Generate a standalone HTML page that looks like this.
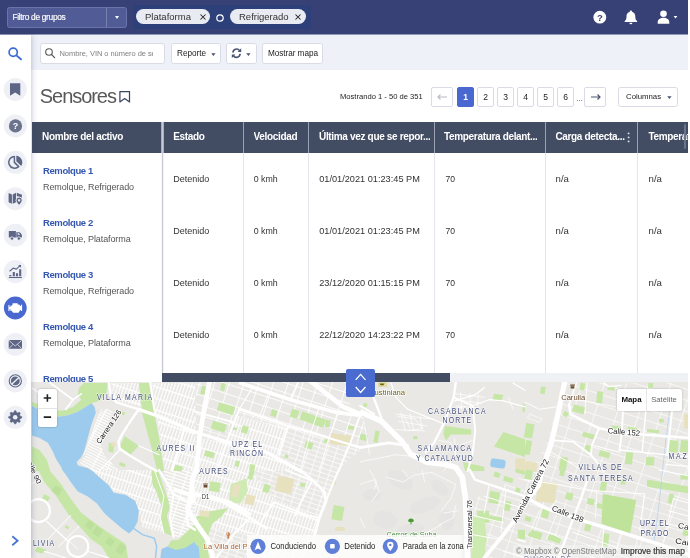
<!DOCTYPE html>
<html lang="es">
<head>
<meta charset="utf-8">
<title>Sensores</title>
<style>
*{box-sizing:border-box;margin:0;padding:0}
html,body{width:690px;height:558px;overflow:hidden;background:#fff;font-family:"Liberation Sans",sans-serif;color:#333;}
#wrap{position:absolute;left:0;top:0;width:690px;height:558px;overflow:hidden;will-change:transform;transform:translateZ(0)}
.abs{position:absolute}
#hdr{position:absolute;left:0;top:0;width:690px;height:35px;background:#374175;border-bottom:1px solid #9097b8}
#chipband{position:absolute;left:133px;top:5px;width:178px;height:24px;background:#2d4079}
#gf{position:absolute;left:7px;top:7px;width:120px;height:21px;background:#515c97;border:1px solid #6a74aa;border-radius:2.5px;color:#fff;font-size:8.4px;line-height:18.5px;padding-left:4.4px;letter-spacing:-0.32px;-webkit-text-stroke:0.15px #fff}
#gf i{position:absolute;left:98px;top:0;width:1px;height:19px;background:#7880b0}
#gf b{position:absolute;left:107px;top:8px;border:2.5px solid transparent;border-top:3.5px solid #fff;width:0;height:0}
.chip{position:absolute;top:9px;height:15px;border-radius:8px;background:#e9ebf3;color:#333;font-size:9.5px;line-height:15px;padding-left:10px}
.chip span{position:absolute;right:5px;top:0;font-size:8.5px;font-weight:bold;color:#222}
#side{position:absolute;left:0;top:35px;width:31px;height:524px;background:#fff;box-shadow:1px 0 5px rgba(60,70,110,.28);z-index:5}
#tool{position:absolute;left:30px;top:35px;width:660px;height:35px;background:#eff1f8}
.btn{position:absolute;background:#fff;border:1px solid #d9dce6;border-radius:2.5px;font-size:8.2px;color:#222;line-height:19px;height:21px;white-space:nowrap}
.car{position:absolute;border:2.3px solid transparent;border-top:2.9px solid #4a5470;width:0;height:0}
#title{position:absolute;left:39.8px;top:83.3px;font-size:20px;font-weight:normal;color:#585858;letter-spacing:-1.05px;line-height:26px}
.pg{position:absolute;top:87px;height:20px;width:17px;border:1px solid #d9dce6;border-radius:2px;background:#fff;font-size:8.5px;line-height:18px;text-align:center;color:#222}
#thead{position:absolute;left:32px;top:122px;width:656px;height:31px;background:#424c63}
.th{position:absolute;top:122px;height:31px;color:#fff;font-weight:bold;font-size:10px;letter-spacing:-0.33px;line-height:29px;white-space:nowrap;overflow:hidden}
.vl{position:absolute;top:122px;width:1px;height:251px;background:#e3e5ea}
.td{position:absolute;font-size:9px;color:#333;white-space:nowrap;line-height:12px}
.nm{position:absolute;left:43px;font-size:9.5px;font-weight:bold;letter-spacing:-0.4px;color:#3557b0;white-space:nowrap;line-height:12px}
.sb{position:absolute;left:43px;font-size:9px;letter-spacing:-0.1px;color:#555;white-space:nowrap;line-height:12px}
#map{position:absolute;left:31px;top:382px;width:659px;height:176px;overflow:hidden;background:#e8e6e1}
</style>
</head>
<body>
<div id="wrap">
<div id="hdr">
  <div id="chipband"></div>
  <div id="gf">Filtro de grupos<i></i><b></b></div>
  <div class="chip" style="left:136px;width:74px;padding-left:9px">Plataforma<svg class="abs" style="left:63.6px;top:4.6px" width="6" height="6"><path d="M0.5 0.5 L5.5 5.5 M5.5 0.5 L0.5 5.5" stroke="#222" stroke-width="1.05"/></svg></div>
  <svg class="abs" style="left:215px;top:12.6px" width="10" height="10"><circle cx="5" cy="5" r="3.2" fill="none" stroke="#fff" stroke-width="1.2"/></svg>
  <div class="chip" style="left:230px;width:76px;padding-left:9px">Refrigerado<svg class="abs" style="left:64.8px;top:4.6px" width="6" height="6"><path d="M0.5 0.5 L5.5 5.5 M5.5 0.5 L0.5 5.5" stroke="#222" stroke-width="1.05"/></svg></div>
<svg class="abs" style="left:586px;top:3px" width="100" height="28" viewBox="586 3 100 28">
<circle cx="599.8" cy="17.2" r="6.4" fill="#fff"/><text x="599.8" y="20.6" font-family="Liberation Sans, sans-serif" font-weight="bold" font-size="9.5" fill="#353f73" text-anchor="middle">?</text>
<path d="M630.9 10.6 c0.7 0 1.1 0.5 1.1 1.1 c2.2 0.6 3.3 2.5 3.3 4.7 c0 2.6 0.6 3.6 1.8 4.6 v0.9 h-12.4 v-0.9 c1.2 -1 1.8 -2 1.8 -4.6 c0 -2.2 1.1 -4.1 3.3 -4.7 c0 -0.6 0.4 -1.1 1.1 -1.1 z" fill="#fff"/><path d="M629.4 22.7 h3 a1.5 1.5 0 0 1 -3 0 z" fill="#fff"/>
<circle cx="663.5" cy="13.8" r="3.3" fill="#fff"/><path d="M657.7 23.7 v-1.4 c0 -3 2.6 -4.6 5.8 -4.6 c3.2 0 5.8 1.6 5.8 4.6 v1.4 z" fill="#fff"/>
<path d="M673.6 16 h3.8 l-1.9 2.4 z" fill="#fff"/>
</svg>
</div>
<div id="tool"></div>
<div class="btn" style="left:40px;top:43px;width:125px;border-radius:3px"></div>
<svg class="abs" style="left:44px;top:47px" width="12" height="12" viewBox="0 0 12 12"><circle cx="5" cy="5" r="3.3" fill="none" stroke="#555" stroke-width="1.1"/><path d="M7.4 7.4 L10.6 10.6" stroke="#555" stroke-width="1.3" stroke-linecap="round"/></svg>
<div class="abs" style="left:59.5px;top:47.5px;width:93px;height:12px;overflow:hidden;font-size:7.5px;line-height:12px;color:#808080;white-space:nowrap;letter-spacing:-0.05px">Nombre, VIN o número de serie</div>
<div class="btn" style="left:171px;top:43px;width:50px;padding-left:5px">Reporte<svg class="abs" style="left:38.5px;top:8.6px" width="5" height="3.2" viewBox="0 0 5 3.2"><path d="M0.2 0.2 H4.6 L2.4 3 Z" fill="#4a5470"/></svg></div>
<div class="btn" style="left:226px;top:43px;width:31px"><svg class="abs" style="left:19.2px;top:8.6px" width="5" height="3.2" viewBox="0 0 5 3.2"><path d="M0.2 0.2 H4.6 L2.4 3 Z" fill="#4a5470"/></svg>
<svg class="abs" style="left:0;top:0" width="29" height="19" viewBox="227 44 29 19"><g fill="none" stroke="#4a5470" stroke-width="1.6"><path d="M232.9 52.6 A3.7 3.7 0 0 1 239.6 50.6"/><path d="M240.1 53.8 A3.7 3.7 0 0 1 233.4 55.8"/></g><path d="M241.2 48.3 V52 H237.5 Z M231.8 58.1 V54.4 H235.5 Z" fill="#4a5470"/></svg></div>
<div class="btn" style="left:262px;top:43px;width:61px;padding-left:5px;letter-spacing:-0.05px">Mostrar mapa</div>
<div id="side"></div>
<svg class="abs" style="left:0;top:34px;z-index:6" width="34" height="524" viewBox="0 34 34 524">
<circle cx="15.3" cy="89.4" r="11.5" fill="#eff0f6"/>
<circle cx="15.3" cy="125.9" r="11.5" fill="#eff0f6"/>
<circle cx="15.3" cy="162.3" r="11.5" fill="#eff0f6"/>
<circle cx="15.3" cy="198.7" r="11.5" fill="#eff0f6"/>
<circle cx="15.3" cy="235.2" r="11.5" fill="#eff0f6"/>
<circle cx="15.3" cy="271.6" r="11.5" fill="#eff0f6"/>
<circle cx="15.3" cy="308.0" r="11.4" fill="#4a69d0"/>
<circle cx="15.3" cy="344.4" r="11.5" fill="#eff0f6"/>
<circle cx="15.3" cy="380.9" r="11.5" fill="#eff0f6"/>
<circle cx="15.3" cy="417.3" r="11.5" fill="#eff0f6"/>
<circle cx="13.2" cy="52.2" r="4.1" fill="none" stroke="#3d6bd1" stroke-width="1.7"/><path d="M16.4 55.4 L21 59.3" stroke="#3d6bd1" stroke-width="1.9" stroke-linecap="round"/>
<path d="M10 83.3 h10.3 v12.4 l-5.15 -3.3 l-5.15 3.3 z" fill="#5d6785"/>
<circle cx="15.5" cy="125.9" r="6.6" fill="#6b748d"/><text x="15.5" y="129.0" font-family="Liberation Sans, sans-serif" font-weight="bold" font-size="9" fill="#fff" text-anchor="middle">?</text>
<path d="M14.4 156.4 A5.9 5.9 0 1 0 18.7 166.6 L14.4 162.4 Z" fill="none" stroke="#5d6785" stroke-width="1.5" stroke-linejoin="round"/><path d="M16.3 155.8 A6.5 6.5 0 0 1 21.2 165.9 L16.3 161.2 Z" fill="#5d6785"/>
<path d="M8.6 192.9 l3.3 1.5 v9.4 l-3.3 -1.5 z M12.7 194.4 l3.3 -1.6 v9.4 l-3.3 1.6 z M16.8 192.8 l3.6 1.5 l1.5 0.2 v3.2 l-5.1 -1.6 z" fill="#5d6785"/><path d="M19.1 197.1 a3.1 3.1 0 0 1 3.1 3.1 c0 2.2 -3.1 5 -3.1 5 c0 0 -3.1 -2.8 -3.1 -5 a3.1 3.1 0 0 1 3.1 -3.1 z" fill="#5d6785" stroke="#eff0f6" stroke-width="0.9"/><rect x="18" y="199.2" width="2.2" height="2.2" rx="0.4" fill="#eff0f6"/>
<path d="M8.8 231.0 h7.1 v6.6 h-7.1 z M16.3 232.2 h2.8 q1 0 1.6 0.9 l1.2 1.9 v2.6 h-5.6 z" fill="#5d6785"/><path d="M17.6 233.2 h1.4 l1.2 1.6 h-2.6 z" fill="#eff0f6"/><circle cx="12" cy="238.5" r="1.7" fill="#5d6785" stroke="#eff0f6" stroke-width="0.8"/><circle cx="18.9" cy="238.5" r="1.7" fill="#5d6785" stroke="#eff0f6" stroke-width="0.8"/>
<path d="M8.8 277.5 h13.1" stroke="#5d6785" stroke-width="1.1"/><path d="M10.3 275.0 v1.2 M13.8 272.1 v4.1 M17 273.2 v3 M20.2 269.3 v6.9" stroke="#5d6785" stroke-width="2.1"/><path d="M9.9 271.0 l3.4 -2.8 l3 0.9 l3.3 -3" fill="none" stroke="#5d6785" stroke-width="1.1" stroke-linecap="round"/><path d="M18.2 265.0 h2.8 v2.8 z" fill="#5d6785"/>
<path d="M12.6 303.2 h5 v1.3 h1.6 l1 1.4 h0.7 v-1.2 h1.2 v6.4 h-1.2 v-1.2 h-0.7 l-1.6 2.8 h-5.4 l-1.7 -1.9 h-1.1 v-1.6 h-0.9 v1.7 h-1.1 v-5.8 h1.1 v1.8 h0.9 v-1.2 h1.1 l1.1 -1.2 z" fill="#fff"/>
<rect x="8.7" y="340.0" width="13.3" height="8.8" rx="0.9" fill="#5d6785"/><path d="M8.9 340.4 l6.4 5.6 l6.4 -5.6 M8.9 348.6 l4.4 -4.4 M21.7 348.6 l-4.4 -4.4" fill="none" stroke="#d4d7e2" stroke-width="0.9"/>
<circle cx="15.3" cy="380.9" r="6.1" fill="none" stroke="#5d6785" stroke-width="1.1"/><circle cx="15.3" cy="380.9" r="4.4" fill="#5d6785"/><path d="M11.6 384.3 L19 377.5" stroke="#eff0f6" stroke-width="1.4"/>
<path d="M14.55 410.73 L15.85 410.73 L16.62 412.61 L17.51 412.98 L19.39 412.20 L20.30 413.11 L19.52 414.99 L19.89 415.88 L21.77 416.65 L21.77 417.95 L19.89 418.72 L19.52 419.61 L20.30 421.49 L19.39 422.40 L17.51 421.62 L16.62 421.99 L15.85 423.87 L14.55 423.87 L13.78 421.99 L12.89 421.62 L11.01 422.40 L10.10 421.49 L10.88 419.61 L10.51 418.72 L8.63 417.95 L8.63 416.65 L10.51 415.88 L10.88 414.99 L10.10 413.11 L11.01 412.20 L12.89 412.98 L13.78 412.61Z" fill="#5d6785" stroke="#5d6785" stroke-width="0.6" stroke-linejoin="round"/><circle cx="15.2" cy="417.3" r="2.3" fill="#eff0f6"/>
<path d="M12.3 536.2 L17.6 540.7 L12.3 545.2" fill="none" stroke="#4677d6" stroke-width="1.8"/>
</svg>
<div id="title">Sensores</div>
<svg class="abs" style="left:117px;top:88px" width="16" height="17" viewBox="117 88 16 17"><path d="M119.9 91.5 H129.5 V101.9 L124.7 98.6 L119.9 101.9 Z" fill="none" stroke="#3c4660" stroke-width="1.25" stroke-linejoin="round"/></svg>
<div class="td" style="left:340px;top:90.5px;font-size:7.6px;color:#222">Mostrando 1 - 50 de 351</div>
<div class="pg" style="left:431px;width:22px"><svg width="12" height="8" viewBox="0 0 12 8" style="position:absolute;left:4px;top:5px"><path d="M11 4 H2 M4.5 1.5 L2 4 L4.5 6.5" fill="none" stroke="#b9bcc6" stroke-width="1.1"/></svg></div>
<div class="pg" style="left:457px;background:#4a69d0;border-color:#4a69d0;color:#fff;font-weight:bold">1</div>
<div class="pg" style="left:477px;">2</div>
<div class="pg" style="left:497px;">3</div>
<div class="pg" style="left:517px;">4</div>
<div class="pg" style="left:537px;">5</div>
<div class="pg" style="left:557px;">6</div>
<div class="td" style="left:576.5px;top:93px;font-size:7.5px">...</div>
<div class="pg" style="left:584px;width:22px"><svg width="12" height="8" viewBox="0 0 12 8" style="position:absolute;left:4.5px;top:5px"><path d="M1 4 H10 M7.5 1.5 L10 4 L7.5 6.5" fill="none" stroke="#4a5470" stroke-width="1.2"/></svg></div>
<div class="btn" style="left:618px;top:87px;width:60px;height:20px;line-height:18px;padding-left:7px;font-size:7.8px">Columnas<svg class="abs" style="left:48.3px;top:7.5px" width="5" height="3.2" viewBox="0 0 5 3.2"><path d="M0.2 0.2 H4.6 L2.4 3 Z" fill="#4a5470"/></svg></div>
<div id="thead"></div>
<div class="th" style="left:42px">Nombre del activo</div>
<div class="th" style="left:173.2px">Estado</div>
<div class="th" style="left:253.5px">Velocidad</div>
<div class="th" style="left:319px">Última vez que se repor...</div>
<div class="th" style="left:444px">Temperatura delant...</div>
<div class="th" style="left:555.4px">Carga detecta...</div>
<div class="th" style="left:648.4px">Temperat</div>
<div class="vl" style="left:243px"></div>
<div class="vl" style="left:308px"></div>
<div class="vl" style="left:434px"></div>
<div class="vl" style="left:545px"></div>
<div class="vl" style="left:637px"></div>
<div class="abs" style="left:161px;top:153px;width:1px;height:220px;background:#f6f7f9"></div><div class="abs" style="left:162px;top:153px;width:1px;height:220px;background:#c9ccd5"></div><div class="abs" style="left:163px;top:153px;width:1px;height:220px;background:#f0f1f4"></div>
<div class="abs" style="left:243px;top:122px;width:1px;height:31px;background:#9aa1b2"></div>
<div class="abs" style="left:308px;top:122px;width:1px;height:31px;background:#9aa1b2"></div>
<div class="abs" style="left:434px;top:122px;width:1px;height:31px;background:#9aa1b2"></div>
<div class="abs" style="left:545px;top:122px;width:1px;height:31px;background:#9aa1b2"></div>
<div class="abs" style="left:637px;top:122px;width:1px;height:31px;background:#9aa1b2"></div>
<div class="abs" style="left:161px;top:122px;width:1px;height:31px;background:#a9afbf"></div><div class="abs" style="left:162px;top:122px;width:1px;height:31px;background:#c6cad6"></div><div class="abs" style="left:163px;top:122px;width:1px;height:31px;background:#a9afbf"></div>
<div class="abs" style="left:688px;top:122px;width:2px;height:251px;background:#fff"></div>
<div class="abs" style="left:684px;top:124px;width:2px;height:25px;background:#6b748a;border-radius:1px"></div>
<svg class="abs" style="left:626px;top:130px" width="6" height="14"><circle cx="2.6" cy="3.4" r="0.95" fill="#dfe2ea"/><circle cx="2.6" cy="7.4" r="0.95" fill="#dfe2ea"/><circle cx="2.6" cy="11.4" r="0.95" fill="#dfe2ea"/></svg>
<div class="nm" style="top:164.7px">Remolque 1</div><div class="sb" style="top:180.7px">Remolque, Refrigerado</div>
<div class="td" style="left:173.3px;top:173px;font-size:9px">Detenido</div>
<div class="td" style="left:253.7px;top:173px;font-size:8.8px">0 kmh</div>
<div class="td" style="left:319.2px;top:173px;font-size:9.2px">01/01/2021 01:23:45 PM</div>
<div class="td" style="left:445.6px;top:173px;font-size:8.6px">70</div>
<div class="td" style="left:555.6px;top:173px;font-size:9.6px">n/a</div>
<div class="td" style="left:648.6px;top:173px;font-size:9.6px">n/a</div>
<div class="nm" style="top:216.7px">Remolque 2</div><div class="sb" style="top:232.7px">Remolque, Plataforma</div>
<div class="td" style="left:173.3px;top:225px;font-size:9px">Detenido</div>
<div class="td" style="left:253.7px;top:225px;font-size:8.8px">0 kmh</div>
<div class="td" style="left:319.2px;top:225px;font-size:9.2px">01/01/2021 01:23:45 PM</div>
<div class="td" style="left:445.6px;top:225px;font-size:8.6px">70</div>
<div class="td" style="left:555.6px;top:225px;font-size:9.6px">n/a</div>
<div class="td" style="left:648.6px;top:225px;font-size:9.6px">n/a</div>
<div class="nm" style="top:268.7px">Remolque 3</div><div class="sb" style="top:284.7px">Remolque, Refrigerado</div>
<div class="td" style="left:173.3px;top:277px;font-size:9px">Detenido</div>
<div class="td" style="left:253.7px;top:277px;font-size:8.8px">0 kmh</div>
<div class="td" style="left:319.2px;top:277px;font-size:9.2px">23/12/2020 01:15:15 PM</div>
<div class="td" style="left:445.6px;top:277px;font-size:8.6px">70</div>
<div class="td" style="left:555.6px;top:277px;font-size:9.6px">n/a</div>
<div class="td" style="left:648.6px;top:277px;font-size:9.6px">n/a</div>
<div class="nm" style="top:320.7px">Remolque 4</div><div class="sb" style="top:336.7px">Remolque, Plataforma</div>
<div class="td" style="left:173.3px;top:329px;font-size:9px">Detenido</div>
<div class="td" style="left:253.7px;top:329px;font-size:8.8px">0 kmh</div>
<div class="td" style="left:319.2px;top:329px;font-size:9.2px">22/12/2020 14:23:22 PM</div>
<div class="td" style="left:445.6px;top:329px;font-size:8.6px">70</div>
<div class="td" style="left:555.6px;top:329px;font-size:9.6px">n/a</div>
<div class="td" style="left:648.6px;top:329px;font-size:9.6px">n/a</div>
<div class="nm" style="top:372.7px;height:10px;overflow:hidden">Remolque 5</div>
<div class="abs" style="left:162px;top:372.5px;width:528px;height:9.5px;background:#f0f1f4"></div>
<div class="abs" style="left:162px;top:373px;width:288px;height:9px;background:#424c63"></div>
<div id="map"><svg width="659" height="176" viewBox="31 382 659 176" style="position:absolute;left:0;top:0">
<defs>
<pattern id="g18" width="9" height="4.6" patternUnits="userSpaceOnUse" patternTransform="rotate(18)"><path d="M0 0.4 H9 M0.4 0 V4.6" stroke="#fff" stroke-width="0.75" fill="none"/></pattern>
<pattern id="g18s" width="14" height="9.5" patternUnits="userSpaceOnUse" patternTransform="rotate(18)"><path d="M0 0.5 H14 M0.5 0 V9.5" stroke="#fff" stroke-width="0.85" fill="none"/></pattern>
<pattern id="g18b" width="21" height="10.5" patternUnits="userSpaceOnUse" patternTransform="rotate(18)"><path d="M0 0.5 H21 M0.5 0 V10.5" stroke="#fff" stroke-width="0.9" stroke-opacity="0.7" fill="none"/></pattern>
<pattern id="h28" width="14" height="2.7" patternUnits="userSpaceOnUse" patternTransform="rotate(27)"><path d="M0 0.6 H14 M0.5 0 V2.7" stroke="#fff" stroke-width="1.05" fill="none"/></pattern>
<pattern id="h108" width="3.2" height="11" patternUnits="userSpaceOnUse" patternTransform="rotate(18)"><path d="M0 0.6 H3.2 M0.6 0 V11" stroke="#fff" stroke-width="1.1" fill="none"/></pattern>
<pattern id="h18" width="12" height="3.2" patternUnits="userSpaceOnUse" patternTransform="rotate(18)"><path d="M0 0.6 H12 M0.6 0 V3.2" stroke="#fff" stroke-width="1.1" fill="none"/></pattern>
</defs>
<rect x="31" y="382" width="659" height="176" fill="#e9e8e5"/>
<polygon points="196,383 346,383 352,412 364,418 366,447 350,458 340,470 327,500 316,535 312,558 190,558 192,470" fill="url(#g18)"/>
<polygon points="196,382 346,382 352,412 364,418 366,447 329,438 288,426 239,409 232,432 196,428" fill="#e9e8e5"/>
<polygon points="196,382 346,382 352,412 364,418 366,447 329,438 288,426 239,409 232,432 196,428" fill="url(#g18s)"/>
<polygon points="562,383 690,383 690,558 480,558 472,500 530,472 548,440" fill="url(#g18b)"/>
<polygon points="98.9,414.1 106.6,408.5 112.9,411.7 105.0,429.3 100.2,443.6 105.0,456.4 119.3,471.0 91.4,471.0 82.6,465.9 79.8,462.4 85.0,456.7 89.0,442.3 94.1,426.4" fill="url(#h28)"/>
<polygon points="91.0,470.0 154.3,470.0 156.7,492.7 161.5,505.9 160.3,519.0 163.9,532.7 142.4,527.4 138.8,510.7 135.2,501.1 125.7,493.9 113.7,491.5 108.9,484.3 99.3,477.2" fill="#e9e8e5"/>
<polygon points="91.0,470.0 154.3,470.0 156.7,492.7 161.5,505.9 160.3,519.0 163.9,532.7 142.4,527.4 138.8,510.7 135.2,501.1 125.7,493.9 113.7,491.5 108.9,484.3 99.3,477.2" fill="url(#h108)" />
<polygon points="111.3,383.0 138.8,383.0 142.4,406.9 113.7,399.7" fill="#e9e8e5"/>
<polygon points="111.3,383.0 138.8,383.0 142.4,406.9 113.7,399.7" fill="url(#h108)" />
<polygon points="152.0,383.0 195.0,383.0 195.0,471.0 165.1,471.0 156.7,416.5" fill="#e9e8e5"/>
<polygon points="152.0,383.0 195.0,383.0 195.0,471.0 165.1,471.0 156.7,416.5" fill="url(#h108)" />
<polygon points="163.9,470.0 195.0,470.0 195.0,532.2 173.5,538.2" fill="#e9e8e5"/>
<polygon points="163.9,470.0 195.0,470.0 195.0,532.2 173.5,538.2" fill="url(#h18)" />
<polygon points="195.0,470.0 250.0,470.0 273.9,498.7 319.3,517.8 314.6,534.6 242.8,534.6 195.0,525.0" fill="#e9e8e5"/>
<polygon points="195.0,470.0 250.0,470.0 273.9,498.7 319.3,517.8 314.6,534.6 242.8,534.6 195.0,525.0" fill="url(#h108)" />
<polygon points="230.9,414.1 288.3,428.4 278.7,459.5 300.2,471.0 195.0,471.0 199.8,438.0 226.1,442.8" fill="#e9e8e5"/>
<polygon points="230.9,414.1 288.3,428.4 278.7,459.5 300.2,471.0 195.0,471.0 199.8,438.0 226.1,442.8" fill="url(#h108)" />
<ellipse cx="400" cy="480" rx="14" ry="8" fill="#e2e1dd" opacity="0.45" transform="rotate(30 400 480)"/>
<ellipse cx="425" cy="505" rx="16" ry="7" fill="#e2e1dd" opacity="0.45" transform="rotate(-20 425 505)"/>
<ellipse cx="385" cy="520" rx="12" ry="9" fill="#e2e1dd" opacity="0.45" transform="rotate(10 385 520)"/>
<ellipse cx="440" cy="488" rx="10" ry="6" fill="#e2e1dd" opacity="0.45" transform="rotate(40 440 488)"/>
<ellipse cx="410" cy="530" rx="14" ry="6" fill="#e2e1dd" opacity="0.45" transform="rotate(-10 410 530)"/>
<ellipse cx="372" cy="495" rx="9" ry="6" fill="#e2e1dd" opacity="0.45" transform="rotate(0 372 495)"/>
<ellipse cx="447" cy="520" rx="8" ry="10" fill="#e2e1dd" opacity="0.45" transform="rotate(0 447 520)"/>
<polygon points="31.9,401.7 31.9,405.7 44.3,412.9 56.8,417.0 68.3,415.3 77.8,411.7 87.4,405.7 91.7,403.3 99.3,400.9 106.5,392.6 107.7,383.0 83.8,383.0 79.0,387.8 77.8,395.0 81.4,399.7 73.0,406.9 63.5,410.5 53.9,410.5 42.0,405.7" fill="#c6e6a6" />
<polygon points="138.8,383.0 149.6,383.0 152.0,397.3 154.6,415.3 157.7,430.8 160.3,445.2 163.9,471.0 157.2,471.0 151.5,447.6 146.7,430.8 142.4,414.1 140.5,399.7" fill="#c6e6a6" />
<polygon points="151.5,470.0 157.9,470.0 161.0,479.6 168.2,499.9 169.9,508.3 166.8,515.4 171.6,535.8 164.4,532.7 160.3,519.0 161.5,505.9 156.7,492.7 152.4,484.3" fill="#c6e6a6" />
<polygon points="124.5,436.1 138.8,445.7 130.4,454.7 119.7,447.1" fill="#c6e6a6" />
<polygon points="108.9,442.8 114.2,444.0 113.2,452.8 108.4,451.2" fill="#c6e6a6" />
<rect x="111.3" y="442.3" width="4.3" height="4.3" fill="#e7e1bf"/>
<polygon points="119.7,461.9 125.7,464.3 124.5,467.2 119.0,465.0" fill="#c6e6a6" />
<polygon points="173.5,464.3 183.0,466.7 181.8,471.0 173.0,471.0" fill="#c6e6a6" />
<polygon points="128.0,422.5 130.4,423.2 128.5,427.2 126.6,426.5" fill="#c6e6a6" />
<polygon points="122.1,411.7 125.2,412.2 124.2,415.3 121.6,414.6" fill="#c6e6a6" />
<polygon points="31.9,446.4 39.6,450.0 46.7,459.5 50.3,471.0 31.9,471.0" fill="#c6e6a6" />
<polygon points="38.4,470.0 49.1,470.0 61.1,484.3 70.7,498.7 81.4,513.0 99.3,526.2 111.3,534.6 125.7,544.1 128.0,558.0 108.9,558.0 101.7,546.5 91.0,539.3 82.6,529.8 68.3,514.2 56.3,496.3 44.3,482.0" fill="#c6e6a6" />
<polygon points="44.3,493.9 50.3,497.5 46.7,502.3 42.0,498.7" fill="#c6e6a6" />
<polygon points="65.9,525.0 69.5,526.9 67.8,529.3 64.7,527.4" fill="#c6e6a6" />
<polygon points="37.2,546.5 46.7,550.1 42.0,553.7 34.8,551.3" fill="#c6e6a6" />
<rect x="86.2" y="521.4" width="7.2" height="7.2" fill="#bce09b" transform="rotate(35 89.8 525.0)"/>
<rect x="93.4" y="527.4" width="8.4" height="8.4" fill="#bce09b" transform="rotate(35 97.6 531.6)"/>
<rect x="106.5" y="538.2" width="7.2" height="7.2" fill="#bce09b" transform="rotate(35 110.1 541.7)"/>
<rect x="117.3" y="544.1" width="7.2" height="9.6" fill="#bce09b" transform="rotate(35 120.9 548.9)"/>
<rect x="52.7" y="486.7" width="8.4" height="7.2" fill="#bce09b" transform="rotate(35 56.9 490.3)"/>
<polygon points="167.5,546.5 171.1,540.5 183.0,539.3 195.0,531.0 195.0,541.7 185.4,547.7 175.9,550.1" fill="#c6e6a6" />
<polygon points="195.0,523.8 201.0,526.2 205.8,537.0 209.3,558.0 195.0,558.0" fill="#c6e6a6" />
<polygon points="196,523 206,512 228,508 222,516 212,524 205,545 200,558 178,558 170,548" fill="#c6e6a6"/>
<rect x="217.7" y="404.5" width="16.7" height="8.4" fill="#c6e6a6" transform="rotate(17 226.1 408.7)"/>
<rect x="211.7" y="422.5" width="14.3" height="8.4" fill="#c6e6a6" transform="rotate(17 218.9 426.6)"/>
<rect x="241.6" y="426.0" width="6.5" height="7.2" fill="#c6e6a6" transform="rotate(17 244.9 429.6)"/>
<rect x="271.0" y="409.8" width="5.7" height="6.7" fill="#c6e6a6" transform="rotate(17 273.9 413.1)"/>
<rect x="290.7" y="409.8" width="7.7" height="8.1" fill="#c6e6a6" transform="rotate(17 294.5 413.8)"/>
<rect x="300.2" y="415.3" width="25.1" height="8.4" fill="#c6e6a6" transform="rotate(20 312.8 419.5)"/>
<rect x="305.0" y="441.6" width="7.7" height="7.2" fill="#c6e6a6" transform="rotate(17 308.8 445.2)"/>
<rect x="204.6" y="451.2" width="9.6" height="6.0" fill="#c6e6a6" transform="rotate(17 209.3 454.1)"/>
<rect x="201.0" y="385.9" width="4.8" height="8.6" fill="#c6e6a6" transform="rotate(10 203.4 390.2)"/>
<rect x="220.8" y="383.0" width="4.1" height="7.7" fill="#c6e6a6" transform="rotate(10 222.9 386.8)"/>
<rect x="324.1" y="439.2" width="3.8" height="3.6" fill="#c6e6a6"/>
<rect x="325.3" y="420.1" width="4.8" height="7.2" fill="#c6e6a6" transform="rotate(10 327.7 423.7)"/>
<rect x="348.0" y="426.0" width="6.0" height="3.6" fill="#c6e6a6" transform="rotate(10 351.0 427.8)"/>
<rect x="235.2" y="460.7" width="4.1" height="6.0" fill="#c6e6a6" transform="rotate(10 237.2 463.7)"/>
<rect x="249.5" y="464.3" width="5.3" height="6.0" fill="#c6e6a6" transform="rotate(10 252.2 467.3)"/>
<rect x="284.7" y="454.7" width="3.6" height="3.6" fill="#c6e6a6"/>
<rect x="230.9" y="427.2" width="6.0" height="2.4" fill="#c6e6a6" transform="rotate(17 233.9 428.4)"/>
<rect x="330.1" y="434.4" width="21.5" height="10.8" fill="#e7e1bf" transform="rotate(8 340.9 439.8)"/>
<rect x="209.3" y="482.0" width="10.8" height="9.6" fill="#c6e6a6" transform="rotate(10 214.7 486.7)"/>
<rect x="248.8" y="470.0" width="4.8" height="9.6" fill="#c6e6a6" transform="rotate(15 251.2 474.8)"/>
<rect x="263.2" y="484.3" width="6.5" height="8.4" fill="#c6e6a6" transform="rotate(20 266.4 488.5)"/>
<rect x="196.2" y="514.2" width="17.9" height="3.6" fill="#c6e6a6" transform="rotate(-15 205.2 516.0)"/>
<rect x="332.5" y="505.9" width="10.8" height="14.3" fill="#c6e6a6" transform="rotate(10 337.9 513.0)"/>
<rect x="300.2" y="483.2" width="4.8" height="3.6" fill="#c6e6a6"/>
<rect x="336.1" y="527.4" width="8.4" height="3.6" fill="#c6e6a6"/>
<polygon points="230.9,484.3 246.4,478.4 247.6,491.5 240.4,503.5 228.5,502.3" fill="#cfeab2" />
<rect x="276.3" y="477.2" width="16.7" height="15.5" fill="#e7e1bf" transform="rotate(12 284.7 484.9)"/>
<rect x="245.2" y="495.1" width="9.6" height="9.6" fill="#e7e1bf" transform="rotate(12 250.0 499.9)"/>
<rect x="199.8" y="510.7" width="9.6" height="6.0" fill="#e7e1bf" transform="rotate(10 204.6 513.6)"/>
<rect x="232.1" y="484.3" width="7.2" height="13.2" fill="#e7e1bf" transform="rotate(12 235.7 490.9)"/>
<rect x="332.5" y="480.8" width="3.6" height="3.6" fill="#e7e1bf"/>
<rect x="334.9" y="527.4" width="9.6" height="3.6" fill="#e7e1bf"/>
<polygon points="444.9,426.0 471.2,429.6 471.2,434.4 450.9,434.4 446.1,440.4 443.2,433.7" fill="#c6e6a6" />
<polygon points="503.5,432.0 525.0,439.2 525.0,457.1 493.9,446.4" fill="#c6e6a6" />
<polygon points="493.9,393.8 503.5,395.0 501.1,401.7 492.7,399.7" fill="#c6e6a6" />
<rect x="522.6" y="404.5" width="2.4" height="7.2" fill="#c6e6a6"/>
<rect x="360.0" y="434.4" width="7.2" height="6.0" fill="#c6e6a6" transform="rotate(15 363.6 437.4)"/>
<rect x="374.3" y="430.8" width="4.3" height="12.0" fill="#c6e6a6" transform="rotate(10 376.5 436.8)"/>
<polygon points="462.8,461.9 484.3,466.7 484.3,471.0 465.2,471.0" fill="#c6e6a6" />
<rect x="363.6" y="403.3" width="3.6" height="3.6" fill="#c6e6a6"/>
<rect x="413.1" y="436.1" width="4.3" height="3.1" fill="#c6e6a6"/>
<rect x="515.4" y="458.3" width="9.6" height="12.7" fill="#e7e1bf"/>
<rect x="490.5" y="459" width="15" height="9" rx="3" fill="#9ccbee" transform="rotate(8 498 463)"/>
<rect x="493.9" y="472.4" width="6.0" height="4.8" fill="#c6e6a6" transform="rotate(18 496.9 474.8)"/>
<rect x="503.5" y="477.2" width="9.6" height="4.8" fill="#c6e6a6" transform="rotate(18 508.3 479.6)"/>
<rect x="515.4" y="470.0" width="9.6" height="3.6" fill="#c6e6a6" transform="rotate(18 520.2 471.8)"/>
<rect x="489.1" y="491.5" width="10.0" height="12.0" fill="#c6e6a6" transform="rotate(10 494.2 497.5)"/>
<rect x="477.2" y="510.7" width="12.0" height="12.0" fill="#c6e6a6"/>
<rect x="489.1" y="516.6" width="14.3" height="4.8" fill="#c6e6a6" transform="rotate(10 496.3 519.0)"/>
<rect x="517.8" y="529.8" width="7.2" height="9.6" fill="#c6e6a6"/>
<rect x="503.5" y="501.1" width="7.2" height="9.6" fill="#c6e6a6" transform="rotate(10 507.1 505.9)"/>
<rect x="515.4" y="487.9" width="4.8" height="4.8" fill="#c6e6a6" transform="rotate(18 517.8 490.3)"/>
<polygon points="472.4,515.4 484.3,517.8 486.7,539.3 484.3,558.0 471.2,558.0" fill="#cdeab0" />
<rect x="525.0" y="423.7" width="8.4" height="14.3" fill="#c6e6a6" transform="rotate(10 529.2 430.8)"/>
<rect x="525.0" y="440.4" width="6.0" height="14.3" fill="#c6e6a6" transform="rotate(10 528.0 447.6)"/>
<rect x="572.8" y="405.7" width="12.0" height="7.2" fill="#c6e6a6" transform="rotate(15 578.8 409.3)"/>
<rect x="596.7" y="391.4" width="6.0" height="12.0" fill="#c6e6a6" transform="rotate(5 599.7 397.3)"/>
<rect x="611.1" y="426.0" width="9.6" height="4.8" fill="#c6e6a6" transform="rotate(10 615.9 428.4)"/>
<rect x="627.8" y="427.2" width="9.6" height="3.6" fill="#c6e6a6" transform="rotate(8 632.6 429.0)"/>
<rect x="582.4" y="433.2" width="12.0" height="4.8" fill="#c6e6a6" transform="rotate(15 588.4 435.6)"/>
<rect x="599.1" y="451.2" width="10.8" height="6.0" fill="#c6e6a6" transform="rotate(15 604.5 454.1)"/>
<rect x="645.8" y="457.1" width="8.4" height="8.4" fill="#c6e6a6" transform="rotate(5 649.9 461.3)"/>
<rect x="668.5" y="440.4" width="9.6" height="12.0" fill="#c6e6a6" transform="rotate(5 673.3 446.4)"/>
<rect x="680.4" y="440.4" width="9.6" height="12.0" fill="#c6e6a6" transform="rotate(5 685.2 446.4)"/>
<rect x="559.7" y="457.1" width="7.2" height="13.9" fill="#c6e6a6" transform="rotate(10 563.3 464.1)"/>
<rect x="625.4" y="452.3" width="7.2" height="12.0" fill="#c6e6a6" transform="rotate(5 629.0 458.3)"/>
<rect x="540.5" y="386.6" width="4.8" height="7.2" fill="#c6e6a6" transform="rotate(10 542.9 390.2)"/>
<rect x="580.0" y="383.0" width="4.8" height="7.2" fill="#c6e6a6" transform="rotate(10 582.4 386.6)"/>
<rect x="607.5" y="386.6" width="7.2" height="3.6" fill="#c6e6a6" transform="rotate(10 611.1 388.4)"/>
<rect x="648.2" y="383.0" width="4.8" height="4.8" fill="#c6e6a6"/>
<rect x="658.9" y="418.9" width="4.8" height="3.6" fill="#c6e6a6"/>
<rect x="563.3" y="411.7" width="4.8" height="4.8" fill="#c6e6a6" transform="rotate(30 565.7 414.1)"/>
<rect x="584.8" y="445.2" width="7.2" height="7.2" fill="#c6e6a6" transform="rotate(15 588.4 448.8)"/>
<rect x="647.0" y="429.6" width="12.0" height="3.1" fill="#c6e6a6" transform="rotate(5 652.9 431.2)"/>
<rect x="525.0" y="461.9" width="12.0" height="9.1" fill="#e7e1bf" transform="rotate(10 531.0 466.5)"/>
<rect x="684.0" y="414.1" width="6.0" height="14.3" fill="#e7e1bf"/>
<polygon points="602.7,493.9 636.2,499.9 630.2,533.4 601.5,523.8" fill="#bfe39b" />
<rect x="537.0" y="482.0" width="19.1" height="20.3" fill="#e7e1bf" transform="rotate(8 546.5 492.1)"/>
<rect x="525.0" y="470.0" width="7.2" height="9.6" fill="#c6e6a6" transform="rotate(10 528.6 474.8)"/>
<rect x="565.7" y="492.7" width="7.2" height="7.2" fill="#c6e6a6" transform="rotate(15 569.2 496.3)"/>
<rect x="587.2" y="498.7" width="7.2" height="6.0" fill="#c6e6a6" transform="rotate(15 590.8 501.7)"/>
<rect x="541.7" y="509.5" width="7.2" height="8.4" fill="#c6e6a6" transform="rotate(15 545.3 513.6)"/>
<rect x="596.7" y="503.5" width="6.0" height="4.8" fill="#c6e6a6" transform="rotate(15 599.7 505.9)"/>
<rect x="584.8" y="523.8" width="6.0" height="7.2" fill="#c6e6a6" transform="rotate(15 587.8 527.4)"/>
<rect x="602.7" y="533.4" width="6.0" height="13.2" fill="#c6e6a6" transform="rotate(5 605.7 539.9)"/>
<rect x="668.5" y="493.9" width="4.8" height="9.6" fill="#c6e6a6" transform="rotate(10 670.9 498.7)"/>
<rect x="528.6" y="531.0" width="13.2" height="7.2" fill="#c6e6a6" transform="rotate(18 535.2 534.6)"/>
<rect x="547.7" y="535.8" width="13.2" height="6.0" fill="#c6e6a6" transform="rotate(18 554.3 538.8)"/>
<rect x="682.8" y="529.8" width="7.2" height="6.0" fill="#c6e6a6" transform="rotate(10 686.4 532.8)"/>
<rect x="559.7" y="470.0" width="4.8" height="6.0" fill="#c6e6a6" transform="rotate(10 562.1 473.0)"/>
<rect x="600.3" y="482.0" width="6.0" height="9.6" fill="#c6e6a6" transform="rotate(10 603.3 486.7)"/>
<rect x="620.7" y="479.6" width="4.8" height="4.8" fill="#c6e6a6"/>
<rect x="525.0" y="516.6" width="6.0" height="4.8" fill="#c6e6a6" transform="rotate(18 528.0 519.0)"/>
<rect x="680.4" y="474.8" width="9.6" height="4.8" fill="#c6e6a6"/>
<polygon points="647.0,479.6 690.0,486.7 690.0,493.4 647.0,486.7" fill="#c6e6a6" />
<polygon points="31.9,405.7 37.2,408.8 44.3,412.9 56.8,417.0 68.3,415.3 77.8,411.7 87.4,405.7 91.7,403.3 94.6,406.9 95.8,412.9 93.4,418.9 91.0,426.0 88.6,434.4 86.2,444.0 83.8,452.3 81.4,457.1 76.6,461.9 77.8,465.5 87.4,467.9 92.7,471.0 99.3,477.2 108.9,485.5 113.7,492.7 125.7,495.1 135.2,501.1 138.8,510.7 137.6,521.4 134.0,528.6 129.2,533.4 122.1,528.6 113.7,521.4 104.1,513.0 97.0,503.5 87.4,496.3 77.8,491.5 70.7,482.0 65.9,474.8 62.3,470.0 61.1,466.7 56.3,459.5 52.7,451.2 47.9,442.8 39.6,438.0 31.9,435.6" fill="#9ccbee"/>
<polyline points="134.0,528.6 142.4,534.6 154.3,538.2 156.7,546.5 155.5,558.0" fill="none" stroke="#9ccbee" stroke-width="1.43" stroke-linejoin="round" stroke-linecap="round" />
<polygon points="160.3,558.0 161.5,548.9 167.5,546.5 175.9,550.1 185.4,547.7 195.0,541.7 195.0,558.0" fill="#9ccbee" />
<polygon points="195.0,544.1 198.6,546.5 199.8,558.0 195.0,558.0" fill="#9ccbee" />
<polyline points="669.7,410.5 666.1,438.0 662.5,471.0" fill="none" stroke="#a9cdf0" stroke-width="0.60" stroke-linejoin="round" stroke-linecap="round" />
<polyline points="662.5,470.0 658.9,505.9 654.1,541.7" fill="none" stroke="#a9cdf0" stroke-width="0.60" stroke-linejoin="round" stroke-linecap="round" />
<polyline points="50.3,383.0 73.0,399.7 65.9,409.3" fill="none" stroke="#fff" stroke-width="1.91" stroke-linejoin="round" stroke-linecap="round" />
<polyline points="73.0,399.7 81.4,393.8" fill="none" stroke="#fff" stroke-width="1.43" stroke-linejoin="round" stroke-linecap="round" />
<polyline points="31.9,387.8 44.3,397.3 53.9,406.9" fill="none" stroke="#fff" stroke-width="1.20" stroke-linejoin="round" stroke-linecap="round" />
<circle cx="38.4" cy="510.7" r="11.5" fill="none" stroke="#fff" stroke-width="2.2"/>
<circle cx="77.8" cy="546.5" r="10.5" fill="none" stroke="#fff" stroke-width="2.2"/>
<polyline points="46.7,521.4 68.3,541.7" fill="none" stroke="#fff" stroke-width="1.20" stroke-linejoin="round" stroke-linecap="round" />
<polyline points="70.7,515.4 47.9,539.3" fill="none" stroke="#fff" stroke-width="0.96" stroke-linejoin="round" stroke-linecap="round" />
<polyline points="79.0,526.2 58.7,546.5" fill="none" stroke="#fff" stroke-width="0.96" stroke-linejoin="round" stroke-linecap="round" />
<polyline points="56.3,529.8 77.8,548.9" fill="none" stroke="#fff" stroke-width="0.72" stroke-linejoin="round" stroke-linecap="round" />
<polyline points="87.4,551.3 108.9,558.0" fill="none" stroke="#fff" stroke-width="1.20" stroke-linejoin="round" stroke-linecap="round" />
<polyline points="30.0,484.3 39.6,479.6" fill="none" stroke="#fff" stroke-width="0.96" stroke-linejoin="round" stroke-linecap="round" />
<polyline points="44.3,551.3 65.9,558.0" fill="none" stroke="#fff" stroke-width="1.20" stroke-linejoin="round" stroke-linecap="round" />
<polyline points="108.9,383.0 110.8,395.0 116.1,402.1 138.8,409.3" fill="none" stroke="#fff" stroke-width="2.39" stroke-linejoin="round" stroke-linecap="round" />
<polyline points="138.8,409.3 159.1,416.5 187.8,428.9 195.0,432.0" fill="none" stroke="#fff" stroke-width="3.35" stroke-linejoin="round" stroke-linecap="round" />
<polyline points="138.8,409.3 130.4,421.3 122.1,434.4 118.5,441.6 119.7,448.8 130.4,455.9 142.4,463.1 156.7,471.0" fill="none" stroke="#fff" stroke-width="2.39" stroke-linejoin="round" stroke-linecap="round" />
<polyline points="150.3,383.0 154.3,409.3 156.0,415.3" fill="none" stroke="#fff" stroke-width="2.15" stroke-linejoin="round" stroke-linecap="round" />
<polyline points="184.2,428.4 178.3,450.0 172.3,471.0" fill="none" stroke="#fff" stroke-width="2.15" stroke-linejoin="round" stroke-linecap="round" />
<polyline points="138.8,445.7 159.1,454.7" fill="none" stroke="#fff" stroke-width="1.20" stroke-linejoin="round" stroke-linecap="round" />
<polyline points="99.3,471.0 119.7,450.0" fill="none" stroke="#fff" stroke-width="1.20" stroke-linejoin="round" stroke-linecap="round" />
<polyline points="101.7,409.3 83.8,454.7" fill="none" stroke="#fff" stroke-width="0.72" stroke-linejoin="round" stroke-linecap="round" />
<polyline points="159.1,470.0 173.5,493.9 185.4,501.1 195.0,502.3" fill="none" stroke="#fff" stroke-width="2.39" stroke-linejoin="round" stroke-linecap="round" />
<polyline points="173.5,493.9 169.9,517.8 173.5,537.0" fill="none" stroke="#fff" stroke-width="1.91" stroke-linejoin="round" stroke-linecap="round" />
<polyline points="154.3,470.0 163.9,496.3 160.3,517.8 163.9,533.4" fill="none" stroke="#fff" stroke-width="0.96" stroke-linejoin="round" stroke-linecap="round" />
<polyline points="195.0,498.7 186.6,505.9 187.8,525.0 195.0,529.8" fill="none" stroke="#fff" stroke-width="2.39" stroke-linejoin="round" stroke-linecap="round" />
<polyline points="209.3,383.0 204.6,406.9 199.8,435.6 196.2,471.0" fill="none" stroke="#fff" stroke-width="4.78" stroke-linejoin="round" stroke-linecap="round" />
<polyline points="240.4,383.0 290.7,399.7 338.5,412.9 360.0,415.3" fill="none" stroke="#fff" stroke-width="3.59" stroke-linejoin="round" stroke-linecap="round" />
<polyline points="195.0,432.0 226.1,441.6 266.7,452.3 300.2,471.0" fill="none" stroke="#fff" stroke-width="3.35" stroke-linejoin="round" stroke-linecap="round" />
<polyline points="239.2,409.3 288.3,426.0 328.9,438.0 360.0,447.6" fill="none" stroke="#fff" stroke-width="2.15" stroke-linejoin="round" stroke-linecap="round" />
<polyline points="239.2,409.3 230.9,430.8 216.5,471.0" fill="none" stroke="#fff" stroke-width="1.91" stroke-linejoin="round" stroke-linecap="round" />
<polyline points="288.3,426.0 278.7,454.7" fill="none" stroke="#fff" stroke-width="1.91" stroke-linejoin="round" stroke-linecap="round" />
<polyline points="360.0,415.3 350.4,442.8 338.5,471.0" fill="none" stroke="#fff" stroke-width="1.91" stroke-linejoin="round" stroke-linecap="round" />
<polyline points="195.0,411.7 234.5,422.5" fill="none" stroke="#fff" stroke-width="1.91" stroke-linejoin="round" stroke-linecap="round" />
<polyline points="297.8,383.0 290.7,399.7" fill="none" stroke="#fff" stroke-width="1.91" stroke-linejoin="round" stroke-linecap="round" />
<polyline points="309.8,380.6 343.3,406.9 360.0,414.1" fill="none" stroke="#fff" stroke-width="4.54" stroke-linejoin="round" stroke-linecap="round" />
<polyline points="252.4,387.8 239.2,409.3" fill="none" stroke="#fff" stroke-width="1.20" stroke-linejoin="round" stroke-linecap="round" />
<polyline points="269.1,392.6 259.6,416.5" fill="none" stroke="#fff" stroke-width="0.96" stroke-linejoin="round" stroke-linecap="round" />
<polyline points="319.3,406.9 309.8,435.6 300.2,471.0" fill="none" stroke="#fff" stroke-width="0.96" stroke-linejoin="round" stroke-linecap="round" />
<polyline points="338.5,412.9 328.9,438.0 319.3,471.0" fill="none" stroke="#fff" stroke-width="0.96" stroke-linejoin="round" stroke-linecap="round" />
<polyline points="300.2,470.0 314.6,482.0 324.1,491.5 326.0,501.1 319.3,517.8 314.6,534.6" fill="none" stroke="#fff" stroke-width="2.87" stroke-linejoin="round" stroke-linecap="round" />
<polyline points="195.0,493.9 223.7,502.3 250.0,517.8 266.7,528.6" fill="none" stroke="#fff" stroke-width="2.63" stroke-linejoin="round" stroke-linecap="round" />
<polyline points="273.9,502.3 262.0,520.2 257.2,534.6" fill="none" stroke="#fff" stroke-width="1.91" stroke-linejoin="round" stroke-linecap="round" />
<polyline points="273.9,502.3 307.4,515.4 319.3,517.8" fill="none" stroke="#fff" stroke-width="1.67" stroke-linejoin="round" stroke-linecap="round" />
<polyline points="216.5,558.0 233.3,534.6 250.0,517.8" fill="none" stroke="#fff" stroke-width="1.91" stroke-linejoin="round" stroke-linecap="round" />
<polyline points="312.2,480.8 300.2,503.5 295.4,515.4" fill="none" stroke="#fff" stroke-width="1.67" stroke-linejoin="round" stroke-linecap="round" />
<polyline points="338.5,470.0 328.9,493.9 326.0,501.1" fill="none" stroke="#fff" stroke-width="1.91" stroke-linejoin="round" stroke-linecap="round" />
<polyline points="196.5,469 192.6,478 191.2,494 188,510 195.8,522.6 207,538.6 213.6,559" fill="none" stroke="#fff" stroke-width="5" stroke-linejoin="round"/>
<polyline points="173.5,489 192.6,495.5 207,495.5 229.3,502 245.3,511.5 251,515" fill="none" stroke="#fff" stroke-width="3.2" stroke-linejoin="round"/>
<polyline points="285.9,470.0 314.6,482.0" fill="none" stroke="#fff" stroke-width="1.43" stroke-linejoin="round" stroke-linecap="round" />
<polyline points="360,411.7 381.5,421.3 395.9,435.6 402,441.5 410.6,454 426.8,462.2 444.5,464.2 455.8,467.4 462.3,477.1 465.5,498 467.5,559" fill="none" stroke="#fff" stroke-width="5.6" stroke-linejoin="round"/>
<polyline points="372.0,393.8 379.1,411.7 382.7,422.5" fill="none" stroke="#fff" stroke-width="2.39" stroke-linejoin="round" stroke-linecap="round" />
<polyline points="360.0,405.7 374.3,414.1" fill="none" stroke="#fff" stroke-width="1.91" stroke-linejoin="round" stroke-linecap="round" />
<polyline points="455.7,383.0 453.7,397.3 443.7,423.7 434.1,442.8 425.8,452.3" fill="none" stroke="#fff" stroke-width="2.39" stroke-linejoin="round" stroke-linecap="round" />
<polyline points="453.7,397.3 472.4,405.7 475.3,430.8 472.4,454.7 467.6,471.0" fill="none" stroke="#fff" stroke-width="1.91" stroke-linejoin="round" stroke-linecap="round" />
<polyline points="472.4,405.7 489.1,399.7 503.5,400.9 525.0,406.9" fill="none" stroke="#fff" stroke-width="1.20" stroke-linejoin="round" stroke-linecap="round" />
<polyline points="391.1,383.0 395.9,397.3 407.8,409.3 431.7,418.9 443.7,423.7" fill="none" stroke="#fff" stroke-width="1.20" stroke-linejoin="round" stroke-linecap="round" />
<polyline points="398.3,416.5 415.0,418.9 422.2,428.4 407.8,430.8" fill="none" stroke="#fff" stroke-width="0.72" stroke-linejoin="round" stroke-linecap="round" />
<polyline points="403.0,414.1 410.2,428.4" fill="none" stroke="#fff" stroke-width="0.72" stroke-linejoin="round" stroke-linecap="round" />
<polyline points="454.5,400.9 474.8,395.0 484.3,387.8" fill="none" stroke="#fff" stroke-width="1.43" stroke-linejoin="round" stroke-linecap="round" />
<polyline points="455.7,406.9 472.4,409.3" fill="none" stroke="#fff" stroke-width="0.72" stroke-linejoin="round" stroke-linecap="round" />
<polyline points="360.0,447.6 388.7,442.8 407.8,445.7" fill="none" stroke="#fff" stroke-width="2.87" stroke-linejoin="round" stroke-linecap="round" />
<polyline points="360.0,461.9 395.9,454.7 419.8,457.1" fill="none" stroke="#fff" stroke-width="0.72" stroke-linejoin="round" stroke-linecap="round" />
<polyline points="364.8,426.0 369.6,454.7" fill="none" stroke="#fff" stroke-width="0.72" stroke-linejoin="round" stroke-linecap="round" />
<polyline points="513.0,383.0 525.0,390.2" fill="none" stroke="#fff" stroke-width="1.20" stroke-linejoin="round" stroke-linecap="round" />
<polyline points="508.3,397.3 513.0,409.3" fill="none" stroke="#fff" stroke-width="0.72" stroke-linejoin="round" stroke-linecap="round" />
<polyline points="395.9,414.1 429.3,418.9" fill="none" stroke="#fff" stroke-width="0.72" stroke-linejoin="round" stroke-linecap="round" />
<polyline points="398.3,421.3 427.0,426.0" fill="none" stroke="#fff" stroke-width="0.72" stroke-linejoin="round" stroke-linecap="round" />
<polyline points="400.7,412.9 405.4,430.8" fill="none" stroke="#fff" stroke-width="0.72" stroke-linejoin="round" stroke-linecap="round" />
<polyline points="410.2,414.1 413.8,430.8" fill="none" stroke="#fff" stroke-width="0.72" stroke-linejoin="round" stroke-linecap="round" />
<polyline points="419.8,416.5 422.7,429.6" fill="none" stroke="#fff" stroke-width="0.72" stroke-linejoin="round" stroke-linecap="round" />
<polyline points="395.9,429.6 424.6,430.8" fill="none" stroke="#fff" stroke-width="0.72" stroke-linejoin="round" stroke-linecap="round" />
<polyline points="454.5,393.8 484.3,397.3" fill="none" stroke="#fff" stroke-width="0.72" stroke-linejoin="round" stroke-linecap="round" />
<polyline points="455.7,399.7 482.0,403.3" fill="none" stroke="#fff" stroke-width="0.72" stroke-linejoin="round" stroke-linecap="round" />
<polyline points="456.8,405.7 479.6,408.1" fill="none" stroke="#fff" stroke-width="0.72" stroke-linejoin="round" stroke-linecap="round" />
<polyline points="460.4,392.6 461.6,409.3" fill="none" stroke="#fff" stroke-width="0.72" stroke-linejoin="round" stroke-linecap="round" />
<polyline points="470.0,393.8 470.5,408.1" fill="none" stroke="#fff" stroke-width="0.72" stroke-linejoin="round" stroke-linecap="round" />
<polyline points="478.4,395.0 477.7,406.9" fill="none" stroke="#fff" stroke-width="0.72" stroke-linejoin="round" stroke-linecap="round" />
<polyline points="470.0,470.0 474.8,479.6 525.0,496.3" fill="none" stroke="#fff" stroke-width="2.39" stroke-linejoin="round" stroke-linecap="round" />
<polyline points="525.0,505.9 503.5,534.6 484.3,558.0" fill="none" stroke="#fff" stroke-width="3.83" stroke-linejoin="round" stroke-linecap="round" />
<polyline points="489.1,484.3 484.3,513.0" fill="none" stroke="#fff" stroke-width="0.96" stroke-linejoin="round" stroke-linecap="round" />
<polyline points="505.9,489.1 501.1,532.2" fill="none" stroke="#fff" stroke-width="0.96" stroke-linejoin="round" stroke-linecap="round" />
<polyline points="484.3,496.3 522.6,508.3" fill="none" stroke="#fff" stroke-width="0.96" stroke-linejoin="round" stroke-linecap="round" />
<polyline points="472.4,515.4 503.5,522.6" fill="none" stroke="#fff" stroke-width="0.96" stroke-linejoin="round" stroke-linecap="round" />
<polyline points="472.4,534.6 498.7,539.3" fill="none" stroke="#fff" stroke-width="0.96" stroke-linejoin="round" stroke-linecap="round" />
<polyline points="517.8,539.3 525.0,541.7" fill="none" stroke="#fff" stroke-width="1.91" stroke-linejoin="round" stroke-linecap="round" />
<polyline points="503.5,551.3 525.0,558.0" fill="none" stroke="#fff" stroke-width="1.20" stroke-linejoin="round" stroke-linecap="round" />
<polyline points="360.0,484.3 374.3,479.6 379.1,491.5 372.0,501.1" fill="none" stroke="#fcfcfb" stroke-width="0.77" stroke-linejoin="round" stroke-linecap="round" />
<polyline points="369.6,470.0 376.7,482.0 374.3,489.1" fill="none" stroke="#fcfcfb" stroke-width="0.77" stroke-linejoin="round" stroke-linecap="round" />
<polyline points="386.3,477.2 403.0,482.0 415.0,474.8 431.7,472.4" fill="none" stroke="#fcfcfb" stroke-width="0.77" stroke-linejoin="round" stroke-linecap="round" />
<polyline points="422.2,470.0 424.6,482.0" fill="none" stroke="#fcfcfb" stroke-width="0.77" stroke-linejoin="round" stroke-linecap="round" />
<polyline points="431.7,472.4 455.7,484.3 450.9,498.7 441.3,510.7" fill="none" stroke="#fcfcfb" stroke-width="0.77" stroke-linejoin="round" stroke-linecap="round" />
<polyline points="438.9,525.0 453.3,517.8 455.7,505.9" fill="none" stroke="#fcfcfb" stroke-width="0.77" stroke-linejoin="round" stroke-linecap="round" />
<polyline points="443.7,513.0 458.0,510.7" fill="none" stroke="#fcfcfb" stroke-width="0.77" stroke-linejoin="round" stroke-linecap="round" />
<polyline points="427.0,532.2 441.3,525.0" fill="none" stroke="#fcfcfb" stroke-width="0.77" stroke-linejoin="round" stroke-linecap="round" />
<polyline points="360.0,517.8 364.8,527.4" fill="none" stroke="#fcfcfb" stroke-width="0.77" stroke-linejoin="round" stroke-linecap="round" />
<polyline points="403.0,470.0 407.8,477.2" fill="none" stroke="#fcfcfb" stroke-width="0.77" stroke-linejoin="round" stroke-linecap="round" />
<polyline points="438.9,440.4 450.9,442.8 455.7,454.7 443.7,471.0" fill="none" stroke="#fcfcfb" stroke-width="0.77" stroke-linejoin="round" stroke-linecap="round" />
<polyline points="472.4,440.4 460.4,445.2" fill="none" stroke="#fcfcfb" stroke-width="0.77" stroke-linejoin="round" stroke-linecap="round" />
<polyline points="454.5,438.0 455.7,454.7" fill="none" stroke="#fcfcfb" stroke-width="0.77" stroke-linejoin="round" stroke-linecap="round" />
<polyline points="441.3,457.1 450.9,461.9" fill="none" stroke="#fcfcfb" stroke-width="0.77" stroke-linejoin="round" stroke-linecap="round" />
<polyline points="564.5,383.0 558.5,411.7 551.3,442.8 541.7,471.0" fill="none" stroke="#fff" stroke-width="5.26" stroke-linejoin="round" stroke-linecap="round" />
<polyline points="569.2,404.5 570.4,414.1 599.1,428.4 625.4,433.2 690.0,438.0" fill="none" stroke="#fff" stroke-width="2.39" stroke-linejoin="round" stroke-linecap="round" />
<polyline points="569.2,404.5 576.4,383.0" fill="none" stroke="#fff" stroke-width="1.43" stroke-linejoin="round" stroke-linecap="round" />
<polyline points="599.1,428.4 592.0,445.2 590.8,454.7" fill="none" stroke="#fff" stroke-width="1.91" stroke-linejoin="round" stroke-linecap="round" />
<polyline points="553.7,440.4 572.8,441.6 590.8,454.7 603.9,471.0" fill="none" stroke="#fff" stroke-width="1.91" stroke-linejoin="round" stroke-linecap="round" />
<polyline points="623.0,410.5 621.8,433.2 619.5,450.0" fill="none" stroke="#fff" stroke-width="1.91" stroke-linejoin="round" stroke-linecap="round" />
<polyline points="645.8,410.5 642.2,452.3" fill="none" stroke="#fff" stroke-width="1.43" stroke-linejoin="round" stroke-linecap="round" />
<polyline points="672.1,410.5 667.3,454.7" fill="none" stroke="#fff" stroke-width="1.91" stroke-linejoin="round" stroke-linecap="round" />
<polyline points="619.5,450.0 690.0,457.1" fill="none" stroke="#fff" stroke-width="1.43" stroke-linejoin="round" stroke-linecap="round" />
<polyline points="587.2,383.0 584.8,414.1" fill="none" stroke="#fff" stroke-width="0.96" stroke-linejoin="round" stroke-linecap="round" />
<polyline points="570.4,398.5 615.9,406.9" fill="none" stroke="#fff" stroke-width="0.72" stroke-linejoin="round" stroke-linecap="round" />
<polyline points="525.0,402.1 539.3,409.3 556.1,406.9" fill="none" stroke="#fff" stroke-width="0.96" stroke-linejoin="round" stroke-linecap="round" />
<polyline points="529.8,414.1 541.7,418.9 539.3,422.5 527.4,417.7 529.8,414.1" fill="none" stroke="#fff" stroke-width="0.60" stroke-linejoin="round" stroke-linecap="round" />
<polyline points="603.9,383.0 608.7,386.6 620.7,385.4" fill="none" stroke="#fff" stroke-width="1.43" stroke-linejoin="round" stroke-linecap="round" />
<polyline points="592.0,445.2 620.7,452.3" fill="none" stroke="#fff" stroke-width="0.96" stroke-linejoin="round" stroke-linecap="round" />
<polyline points="666.1,464.3 690.0,466.7" fill="none" stroke="#fff" stroke-width="1.20" stroke-linejoin="round" stroke-linecap="round" />
<polyline points="551.3,452.3 572.8,464.3 582.4,471.0" fill="none" stroke="#fff" stroke-width="0.96" stroke-linejoin="round" stroke-linecap="round" />
<polyline points="542.9,465.2 538.6,485.1 529.8,496.3 520.2,508.3" fill="none" stroke="#fff" stroke-width="5.26" stroke-linejoin="round" stroke-linecap="round" />
<polyline points="525.0,497.5 548.9,509.5 584.8,521.4 620.7,532.2 658.9,544.1 690.0,554.9" fill="none" stroke="#fff" stroke-width="3.35" stroke-linejoin="round" stroke-linecap="round" />
<polyline points="588.4,477.2 580.0,501.1 568.0,532.2 558.5,558.0" fill="none" stroke="#fff" stroke-width="2.39" stroke-linejoin="round" stroke-linecap="round" />
<polyline points="525.0,479.6 556.1,484.3 588.4,490.3 644.6,493.9" fill="none" stroke="#fff" stroke-width="0.96" stroke-linejoin="round" stroke-linecap="round" />
<polyline points="644.6,493.9 639.8,529.8" fill="none" stroke="#fff" stroke-width="1.20" stroke-linejoin="round" stroke-linecap="round" />
<polyline points="596.7,491.5 595.5,517.8" fill="none" stroke="#fff" stroke-width="0.72" stroke-linejoin="round" stroke-linecap="round" />
<polyline points="658.9,470.0 690.0,476.0" fill="none" stroke="#fff" stroke-width="1.20" stroke-linejoin="round" stroke-linecap="round" />
<polyline points="673.3,498.7 690.0,503.5" fill="none" stroke="#fff" stroke-width="0.96" stroke-linejoin="round" stroke-linecap="round" />
<polyline points="668.5,510.7 690.0,516.6" fill="none" stroke="#fff" stroke-width="0.96" stroke-linejoin="round" stroke-linecap="round" />
<polyline points="663.7,522.6 690.0,529.8" fill="none" stroke="#fff" stroke-width="0.96" stroke-linejoin="round" stroke-linecap="round" />
<polyline points="673.3,498.7 663.7,541.7" fill="none" stroke="#fff" stroke-width="0.96" stroke-linejoin="round" stroke-linecap="round" />
<polyline points="556.1,501.1 548.9,509.5" fill="none" stroke="#fff" stroke-width="0.96" stroke-linejoin="round" stroke-linecap="round" />
<polyline points="525.0,525.0 553.7,534.6 563.3,539.3" fill="none" stroke="#fff" stroke-width="0.96" stroke-linejoin="round" stroke-linecap="round" />
<polyline points="603.9,526.2 601.5,558.0" fill="none" stroke="#fff" stroke-width="0.96" stroke-linejoin="round" stroke-linecap="round" />
<polyline points="572.8,532.2 620.7,548.9 644.6,558.0" fill="none" stroke="#fff" stroke-width="0.96" stroke-linejoin="round" stroke-linecap="round" />
<polyline points="539.3,510.7 529.8,532.2" fill="none" stroke="#fff" stroke-width="0.72" stroke-linejoin="round" stroke-linecap="round" />
<polyline points="556.1,515.4 546.5,539.3" fill="none" stroke="#fff" stroke-width="0.72" stroke-linejoin="round" stroke-linecap="round" />
<polyline points="620.7,533.4 615.9,551.3" fill="none" stroke="#fff" stroke-width="0.72" stroke-linejoin="round" stroke-linecap="round" />
<polyline points="637.4,538.2 633.8,558.0" fill="none" stroke="#fff" stroke-width="0.72" stroke-linejoin="round" stroke-linecap="round" />
<g font-family="Liberation Sans, sans-serif">
<text x="0" y="0" textLength="65.5" lengthAdjust="spacing" font-size="8.2" fill="#414c7a" stroke="#fff" stroke-width="1.3" stroke-opacity="0.65" paint-order="stroke" stroke-linejoin="round" transform="translate(97.0 400.0) scale(0.84 1)">VILLA MARIA</text>
<text x="0" y="0" textLength="45.2" lengthAdjust="spacing" font-size="8.2" fill="#414c7a" stroke="#fff" stroke-width="1.3" stroke-opacity="0.65" paint-order="stroke" stroke-linejoin="round" transform="translate(156.5 451.2) scale(0.84 1)">AURES II</text>
<text x="0" y="0" textLength="35.7" lengthAdjust="spacing" font-size="8.2" fill="#414c7a" stroke="#fff" stroke-width="1.3" stroke-opacity="0.65" paint-order="stroke" stroke-linejoin="round" transform="translate(232.0 446.6) scale(0.84 1)">UPZ EL</text>
<text x="0" y="0" textLength="39.3" lengthAdjust="spacing" font-size="8.2" fill="#414c7a" stroke="#fff" stroke-width="1.3" stroke-opacity="0.65" paint-order="stroke" stroke-linejoin="round" transform="translate(230.0 456.2) scale(0.84 1)">RINCÓN</text>
<text x="0" y="0" textLength="33.9" lengthAdjust="spacing" font-size="8.2" fill="#414c7a" stroke="#fff" stroke-width="1.3" stroke-opacity="0.65" paint-order="stroke" stroke-linejoin="round" transform="translate(199.2 473.5) scale(0.84 1)">AURES</text>
<text x="0" y="0" textLength="25.0" lengthAdjust="spacing" font-size="8.2" fill="#414c7a" stroke="#fff" stroke-width="1.3" stroke-opacity="0.65" paint-order="stroke" stroke-linejoin="round" transform="translate(33.0 546.0) scale(0.84 1)">LIVIA</text>
<text x="0" y="0" textLength="68.5" lengthAdjust="spacing" font-size="8.2" fill="#414c7a" stroke="#fff" stroke-width="1.3" stroke-opacity="0.65" paint-order="stroke" stroke-linejoin="round" transform="translate(428.1 413.8) scale(0.84 1)">CASABLANCA</text>
<text x="0" y="0" textLength="33.9" lengthAdjust="spacing" font-size="8.2" fill="#414c7a" stroke="#fff" stroke-width="1.3" stroke-opacity="0.65" paint-order="stroke" stroke-linejoin="round" transform="translate(442.6 423.4) scale(0.84 1)">NORTE</text>
<text x="0" y="0" textLength="63.7" lengthAdjust="spacing" font-size="8.2" fill="#414c7a" stroke="#fff" stroke-width="1.3" stroke-opacity="0.65" paint-order="stroke" stroke-linejoin="round" transform="translate(417.6 450.6) scale(0.84 1)">SALAMANCA</text>
<text x="0" y="0" textLength="67.3" lengthAdjust="spacing" font-size="8.2" fill="#414c7a" stroke="#fff" stroke-width="1.3" stroke-opacity="0.65" paint-order="stroke" stroke-linejoin="round" transform="translate(416.1 460.8) scale(0.84 1)">Y CATALAYUD</text>
<text x="0" y="0" textLength="51.2" lengthAdjust="spacing" font-size="8.2" fill="#414c7a" stroke="#fff" stroke-width="1.3" stroke-opacity="0.65" paint-order="stroke" stroke-linejoin="round" transform="translate(578.5 470.3) scale(0.84 1)">VILLAS DE</text>
<text x="0" y="0" textLength="76.8" lengthAdjust="spacing" font-size="8.2" fill="#414c7a" stroke="#fff" stroke-width="1.3" stroke-opacity="0.65" paint-order="stroke" stroke-linejoin="round" transform="translate(568.1 480.5) scale(0.84 1)">SANTA TERESA</text>
<text x="0" y="0" textLength="33.9" lengthAdjust="spacing" font-size="8.2" fill="#414c7a" stroke="#fff" stroke-width="1.3" stroke-opacity="0.65" paint-order="stroke" stroke-linejoin="round" transform="translate(640.0 526.4) scale(0.84 1)">UPZ EL</text>
<text x="0" y="0" textLength="33.3" lengthAdjust="spacing" font-size="8.2" fill="#414c7a" stroke="#fff" stroke-width="1.3" stroke-opacity="0.65" paint-order="stroke" stroke-linejoin="round" transform="translate(640.5 536.0) scale(0.84 1)">PRADO</text>
<text x="0" y="0" textLength="29.8" lengthAdjust="spacing" font-size="8.2" fill="#414c7a" stroke="#fff" stroke-width="1.3" stroke-opacity="0.65" paint-order="stroke" stroke-linejoin="round" transform="translate(668.5 458.6) scale(0.84 1)">MAZU</text>
<text x="0" y="0" textLength="56.0" lengthAdjust="spacing" font-size="8.2" fill="#414c7a" stroke="#fff" stroke-width="1.3" stroke-opacity="0.65" paint-order="stroke" stroke-linejoin="round" transform="translate(524.0 561.5) scale(0.84 1)">RINCON DE</text>
<text x="-19.5" y="2.6" textLength="39.0" lengthAdjust="spacingAndGlyphs" font-size="7.4" fill="#222" stroke="#fff" stroke-width="1.8" stroke-opacity="0.85" paint-order="stroke" stroke-linejoin="round" transform="translate(108.8 426.6) rotate(-56)">Carrera 126</text>
<text x="-12.0" y="2.6" textLength="24.0" lengthAdjust="spacingAndGlyphs" font-size="7" fill="#222" stroke="#fff" stroke-width="1.8" stroke-opacity="0.85" paint-order="stroke" stroke-linejoin="round" transform="translate(34.6 472.5) rotate(66)">alle 90</text>
<text x="-24.5" y="2.6" textLength="49.0" lengthAdjust="spacingAndGlyphs" font-size="7.6" fill="#222" stroke="#fff" stroke-width="1.8" stroke-opacity="0.85" paint-order="stroke" stroke-linejoin="round" transform="translate(468.9 524.5) rotate(-90)">Transversal 76</text>
<text x="-35.0" y="2.6" textLength="70.0" lengthAdjust="spacingAndGlyphs" font-size="8" fill="#222" stroke="#fff" stroke-width="1.8" stroke-opacity="0.85" paint-order="stroke" stroke-linejoin="round" transform="translate(530.6 490.8) rotate(-62.5)">Avenida Carrera 72</text>
<text x="-16.2" y="2.6" textLength="32.5" lengthAdjust="spacingAndGlyphs" font-size="8" fill="#222" stroke="#fff" stroke-width="1.8" stroke-opacity="0.85" paint-order="stroke" stroke-linejoin="round" transform="translate(623.8 432.0) rotate(5)">Calle 152</text>
<text x="-16.8" y="2.6" textLength="33.5" lengthAdjust="spacingAndGlyphs" font-size="8" fill="#222" stroke="#fff" stroke-width="1.8" stroke-opacity="0.85" paint-order="stroke" stroke-linejoin="round" transform="translate(567.8 514.0) rotate(22)">Calle 138</text>
<text x="-6.5" y="2.6" textLength="13.0" lengthAdjust="spacingAndGlyphs" font-size="7.6" fill="#222" stroke="#fff" stroke-width="1.8" stroke-opacity="0.85" paint-order="stroke" stroke-linejoin="round" transform="translate(684.5 526.5) rotate(12)">Cal</text>
<text x="-8.0" y="2.6" textLength="16.0" lengthAdjust="spacingAndGlyphs" font-size="7.6" fill="#222" stroke="#fff" stroke-width="1.8" stroke-opacity="0.85" paint-order="stroke" stroke-linejoin="round" transform="translate(683.0 542.0) rotate(12)">Call</text>
<text x="201.8" y="498.8" textLength="7.5" lengthAdjust="spacingAndGlyphs" font-size="7.5" fill="#333" stroke="#fff" stroke-width="1.5" stroke-opacity="0.8" paint-order="stroke" stroke-linejoin="round">D1</text>
<path d="M203.2 483.4 h4.6 v1.2 h-4.6 z M203.6 485 h3.8 v2.4 h-3.8 z" fill="#6b4a2c"/>
<text x="203.8" y="548.6" textLength="48.0" lengthAdjust="spacingAndGlyphs" font-size="7.8" fill="#b0602a" stroke="#fff" stroke-width="1.5" stroke-opacity="0.8" paint-order="stroke" stroke-linejoin="round">La Villa del Pa</text>
<path d="M227 532.6 v2.2 q0 0.9 0.8 0.9 v3 M228.6 532.6 v6.1 M228.6 532.6 q1.2 0.5 1.2 2.6 h-1.2" stroke="#c26a2d" stroke-width="0.8" fill="none"/>
<text x="374.6" y="395.2" textLength="30.5" lengthAdjust="spacingAndGlyphs" font-size="7.8" fill="#6e6415" stroke="#fff" stroke-width="1.5" stroke-opacity="0.8" paint-order="stroke" stroke-linejoin="round">ustiniana</text>
<rect x="378" y="382" width="9" height="5" fill="#e3dca6"/><path d="M379.5 383.5 h5 l-1 1.8 h-3 z" fill="#6e6415"/>
<text x="386.5" y="536.8" textLength="50.0" lengthAdjust="spacingAndGlyphs" font-size="7.8" fill="#3e8c32" stroke="#fff" stroke-width="1.5" stroke-opacity="0.8" paint-order="stroke" stroke-linejoin="round">Cerros de Suba</text>
<path d="M411 518.5 c1.8 0 2.8 1.2 2.8 2.2 c0 0.8 -0.8 1.4 -1.6 1.4 h-0.7 v2.2 h-1 v-2.2 h-0.7 c-0.8 0 -1.6 -0.6 -1.6 -1.4 c0 -1 1 -2.2 2.8 -2.2 z" fill="#4a9a38"/>
<text x="561.2" y="400.0" textLength="24.0" lengthAdjust="spacingAndGlyphs" font-size="7.8" fill="#6b4a2c" stroke="#fff" stroke-width="1.5" stroke-opacity="0.8" paint-order="stroke" stroke-linejoin="round">Carulla</text>
<path d="M570.2 384.6 h4.6 v1.2 h-4.6 z M570.6 386.2 h3.8 v2.4 h-3.8 z" fill="#6b4a2c"/>
</g>
</svg></div>
<div class="abs" style="left:345.5px;top:369px;width:29px;height:28px;background:#4a6bcf;border-radius:2px;z-index:4"><svg width="29" height="28" viewBox="345.5 369 29 28" style="position:absolute;left:0;top:0"><path d="M355.2 379.9 L360.1 374.4 L365 379.9 M355.2 387 L360.1 392.5 L365 387" fill="none" stroke="#fff" stroke-width="1.3"/></svg></div>
<div class="abs" style="left:38px;top:389px;width:19px;height:38px;background:#fff;border-radius:2px;box-shadow:0 0 2px rgba(0,0,0,.35);z-index:3"><div class="abs" style="left:0;top:18.5px;width:19px;height:1px;background:#e4e4e4"></div><svg width="19" height="38" style="position:absolute;left:0;top:0"><path d="M5.7 9 H13.1 M9.4 5.3 V12.7 M5.7 28.1 H13.1" stroke="#222" stroke-width="1.6"/></svg></div>
<div class="abs" style="left:617px;top:389px;width:65px;height:22px;background:#fff;border-radius:2px;box-shadow:0 0 2px rgba(0,0,0,.3);z-index:3;font-size:7.8px;line-height:21px;color:#222"><span class="abs" style="left:0;width:29px;text-align:center;font-weight:bold;color:#111;font-size:7.9px">Mapa</span><span class="abs" style="left:29px;width:36px;text-align:center;color:#686868;font-size:7.7px">Satélite</span><div class="abs" style="left:28.5px;top:0;width:1px;height:22px;background:#e6e6e6"></div></div>
<div class="abs" style="left:247px;top:535px;width:222px;height:23px;background:linear-gradient(90deg,rgba(255,255,255,.82) 0,rgba(255,255,255,.82) 96%,rgba(255,255,255,0) 100%);z-index:3"></div>
<svg class="abs" style="left:247px;top:535px;z-index:4" width="222" height="23" viewBox="247 535 222 23">
<circle cx="258" cy="546.3" r="7.6" fill="#5f7fd8"/><path d="M258 541.6 L261.4 550.2 L258 548.4 L254.6 550.2 Z" fill="#fff"/>
<circle cx="332.4" cy="546.3" r="7.6" fill="#5f7fd8"/><rect x="330.1" y="544" width="4.6" height="4.6" rx="0.8" fill="#fff"/>
<circle cx="390.3" cy="546.3" r="7.6" fill="#5f7fd8"/><path d="M390.3 541.7 a3.2 3.2 0 0 1 3.2 3.2 c0 2.3 -3.2 6 -3.2 6 c0 0 -3.2 -3.7 -3.2 -6 a3.2 3.2 0 0 1 3.2 -3.2 z" fill="#fff"/><circle cx="390.3" cy="544.9" r="1.2" fill="#5f7fd8"/>
<g font-family="Liberation Sans, sans-serif" font-size="8.3" fill="#222"><text x="270.5" y="549.3" textLength="45.5" lengthAdjust="spacingAndGlyphs">Conduciendo</text><text x="344.3" y="549.3" textLength="31" lengthAdjust="spacingAndGlyphs">Detenido</text><text x="402.8" y="549.3" textLength="61" lengthAdjust="spacingAndGlyphs">Parada en la zona</text></g>
</svg>
<div class="abs" style="left:513px;top:545px;width:175px;height:13px;background:rgba(255,255,255,.3);z-index:3"></div>
<svg class="abs" style="left:510px;top:544px;z-index:4" width="180" height="14" viewBox="510 544 180 14"><g font-family="Liberation Sans, sans-serif"><text x="516" y="554.3" font-size="8.4" textLength="100.5" lengthAdjust="spacingAndGlyphs" fill="#7a7a7a">© Mapbox © OpenStreetMap</text><text x="620.8" y="554.3" font-size="8.6" textLength="64" lengthAdjust="spacingAndGlyphs" fill="#333" stroke="#333" stroke-width="0.2">Improve this map</text></g></svg>
<div class="abs" id="right-strip" style="left:688px;top:0;width:2px;height:558px;background:#fff;z-index:7"></div>

</div>
</body>
</html>
